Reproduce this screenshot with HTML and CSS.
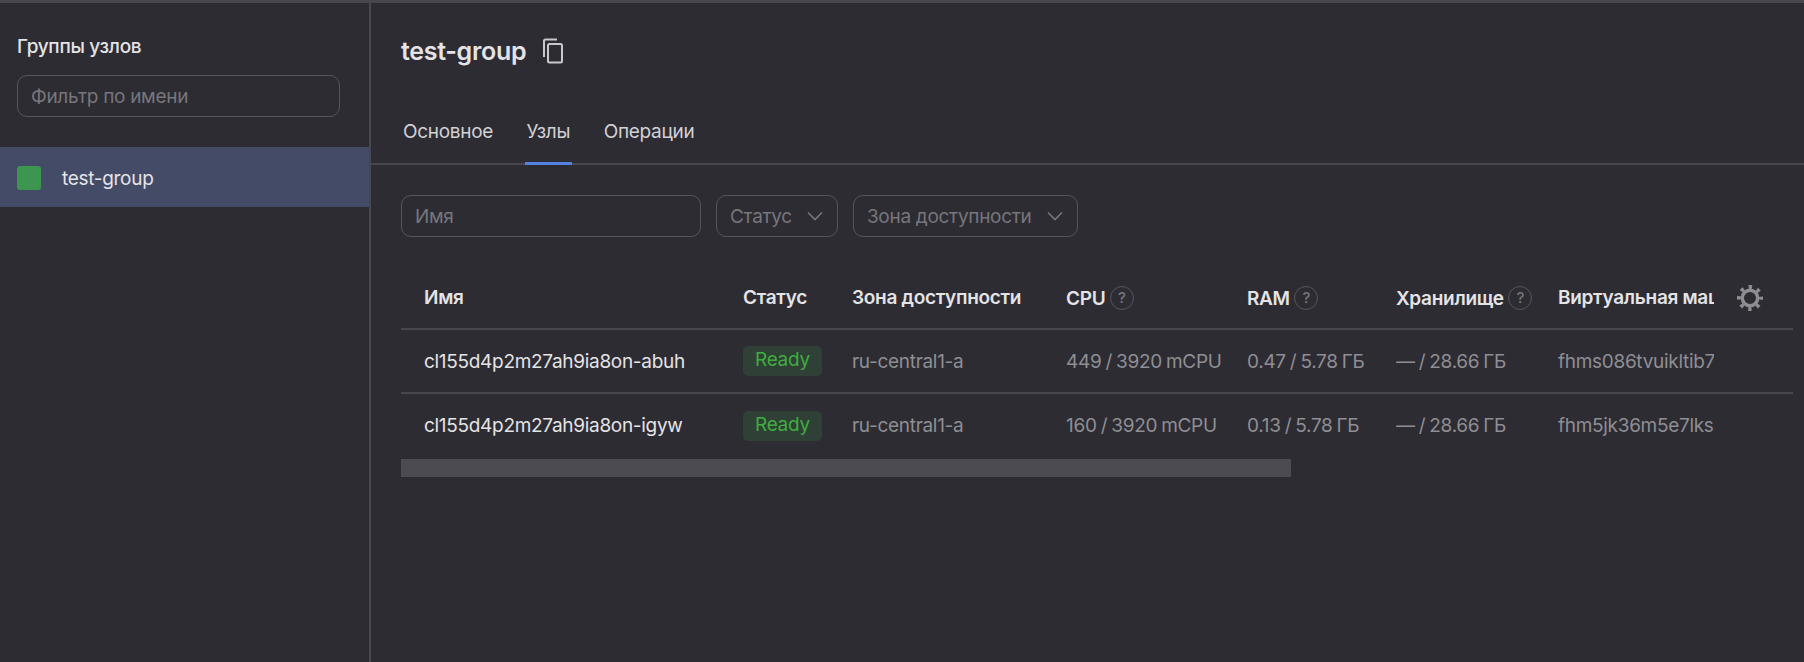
FILE: index.html
```html
<!DOCTYPE html>
<html lang="ru">
<head>
    <meta charset="UTF-8">
    <title>test-group</title>
    <link rel="stylesheet" href="styles.css">
</head>
<body>
    <div class="layout">
        <aside class="sidebar">
            <h2 class="sidebar-title">Группы узлов</h2>
            <div class="field sidebar-filter">Фильтр по имени</div>
            <div class="group-row">
                <span class="group-mark"></span>
                <span>test-group</span>
            </div>
        </aside>
        <main class="content">
            <header class="page-head">
                <h1 class="page-title">test-group</h1>
                <svg class="copy-icon" width="22" height="26" viewBox="0 0 22 26" fill="none" stroke="currentColor" stroke-width="2">
                    <path d="M2 19V3a1.500 1.500 0 0 1 1.500-1.500H15"/>
                    <rect x="6" y="6" width="14" height="18.500" rx="1.500"/>
                </svg>
            </header>
            <nav class="tabs">
                <a class="tab">Основное</a>
                <a class="tab active">Узлы</a>
                <a class="tab">Операции</a>
            </nav>
            <div class="filters">
                <div class="field name-filter">Имя</div>
                <div class="field select">Статус
                    <svg width="18" height="10" viewBox="0 0 18 10" fill="none" stroke="currentColor" stroke-width="1.600"><path d="M2 1.500l7 7 7-7"/></svg>
                </div>
                <div class="field select">Зона доступности
                    <svg width="18" height="10" viewBox="0 0 18 10" fill="none" stroke="currentColor" stroke-width="1.600"><path d="M2 1.500l7 7 7-7"/></svg>
                </div>
            </div>
            <table class="nodes">
                <colgroup>
                    <col class="col-name">
                    <col class="col-status">
                    <col class="col-zone">
                    <col class="col-cpu">
                    <col class="col-ram">
                    <col class="col-disk">
                    <col class="col-vm">
                    <col class="col-gear">
                </colgroup>
                <thead>
                    <tr>
                        <th>Имя</th>
                        <th>Статус</th>
                        <th>Зона доступности</th>
                        <th>CPU <span class="hint">?</span></th>
                        <th>RAM <span class="hint">?</span></th>
                        <th>Хранилище <span class="hint">?</span></th>
                        <th>Виртуальная машина</th>
                        <th class="gear-cell">
                            <svg width="26" height="26" viewBox="0 0 26 26" fill="none" stroke="#8d8d92">
                                <circle cx="13" cy="13" r="7.700" stroke-width="3.400"/>
                                <circle cx="13" cy="13" r="11" stroke-width="4" stroke-dasharray="3.400 5.240" stroke-dashoffset="1.700"/>
                            </svg>
                        </th>
                    </tr>
                </thead>
                <tbody>
                    <tr>
                        <td class="node-name">cl155d4p2m27ah9ia8on-abuh</td>
                        <td><span class="badge">Ready</span></td>
                        <td>ru-central1-a</td>
                        <td class="metric">449 / 3920 mCPU</td>
                        <td class="metric">0.47 / 5.78 ГБ</td>
                        <td class="metric">— / 28.66 ГБ</td>
                        <td>fhms086tvuikltib7ab2</td>
                        <td></td>
                    </tr>
                    <tr>
                        <td class="node-name">cl155d4p2m27ah9ia8on-igyw</td>
                        <td><span class="badge">Ready</span></td>
                        <td>ru-central1-a</td>
                        <td class="metric">160 / 3920 mCPU</td>
                        <td class="metric">0.13 / 5.78 ГБ</td>
                        <td class="metric">— / 28.66 ГБ</td>
                        <td>fhm5jk36m5e7lks8a1q3</td>
                        <td></td>
                    </tr>
                </tbody>
            </table>
            <div class="scrollbar"></div>
        </main>
    </div>
</body>
</html>
```

FILE: styles.css
```css
* {
    box-sizing: border-box;
}
body {
    margin: 0;
    height: 662px;
    overflow: hidden;
    background: #2d2c33;
    color: #e4e3e6;
    font-family: Inter, Arial, sans-serif;
    font-size: 19px;
    letter-spacing: -0.3px;
    border-top: 3px solid #47474d;
}
.layout {
    display: flex;
    height: 659px;
}
.sidebar {
    width: 371px;
    flex: none;
    border-right: 2px solid #47474d;
}
.sidebar-title {
    margin: 32px 0 16px 17px;
    font-size: 19px;
    line-height: 24px;
    font-weight: 500;
}
.field {
    height: 42px;
    border: 1px solid #55555b;
    border-radius: 10px;
    color: #77767c;
    font-size: 19px;
    display: flex;
    align-items: center;
    padding: 0 13px;
}
.sidebar-filter {
    margin: 0 29px 0 17px;
}
.group-row {
    margin-top: 30px;
    height: 60px;
    padding-top: 2px;
    background: #444b67;
    display: flex;
    align-items: center;
    gap: 21px;
    padding-left: 17px;
}
.group-mark {
    width: 24px;
    height: 24px;
    border-radius: 3px;
    background: #3c964f;
}
.content {
    flex: 1;
    min-width: 0;
}
.page-head {
    height: 77px;
    padding: 19px 0 0 30px;
    display: flex;
    align-items: center;
    gap: 16px;
}
.page-title {
    margin: 0;
    font-size: 25px;
    font-weight: 600;
}
.copy-icon {
    color: #c9c8cc;
}
.tabs {
    height: 85px;
    padding: 31px 0 0 30px;
    display: flex;
    gap: 29.500px;
    border-bottom: 2px solid #47474d;
}
.tab {
    height: 54px;
    padding: 8px 2px 0;
    line-height: 26px;
    color: #d2d1d5;
}
.tab.active {
    border-bottom: 3px solid #5282e0;
}
.filters {
    display: flex;
    gap: 15px;
    margin: 30px 0 0 30px;
}
.name-filter {
    width: 300px;
}
.select {
    gap: 14px;
}
.nodes {
    width: 1392px;
    margin: 30px 0 0 30px;
    table-layout: fixed;
    border-collapse: collapse;
}
.col-name { width: 342px; }
.col-status { width: 109px; }
.col-zone { width: 214px; }
.col-cpu { width: 181px; }
.col-ram { width: 149px; }
.col-disk { width: 162px; }
.col-vm { width: 156px; }
.nodes th,
.nodes td {
    padding: 0;
    text-align: left;
    white-space: nowrap;
    overflow: hidden;
}
.nodes th {
    height: 62px;
    font-weight: 600;
    color: #e4e3e6;
    border-bottom: 2px solid #47474d;
}
.nodes td {
    height: 64px;
    color: #8f8e93;
    border-bottom: 2px solid #47474d;
}
.nodes th:first-child,
.nodes td:first-child {
    padding-left: 23px;
}
.nodes td.node-name {
    color: #e4e3e6;
}
.nodes td.metric {
    word-spacing: -1px;
}
.nodes tbody tr:last-child td {
    border-bottom: none;
}
.gear-cell svg {
    display: block;
    margin: 0 0 0 23px;
}
.hint {
    display: inline-flex;
    align-items: center;
    justify-content: center;
    width: 24px;
    height: 24px;
    border: 1px solid #55555b;
    border-radius: 50%;
    color: #77767c;
    font-size: 15px;
    font-weight: 500;
    vertical-align: 1px;
}
.badge {
    display: inline-block;
    height: 30px;
    line-height: 28px;
    padding: 0 12px;
    border-radius: 5px;
    background: #2f4036;
    color: #3fae3f;
}
.scrollbar {
    width: 890px;
    height: 18px;
    margin: 2px 0 0 30px;
    background: #4b4b51;
}
```
